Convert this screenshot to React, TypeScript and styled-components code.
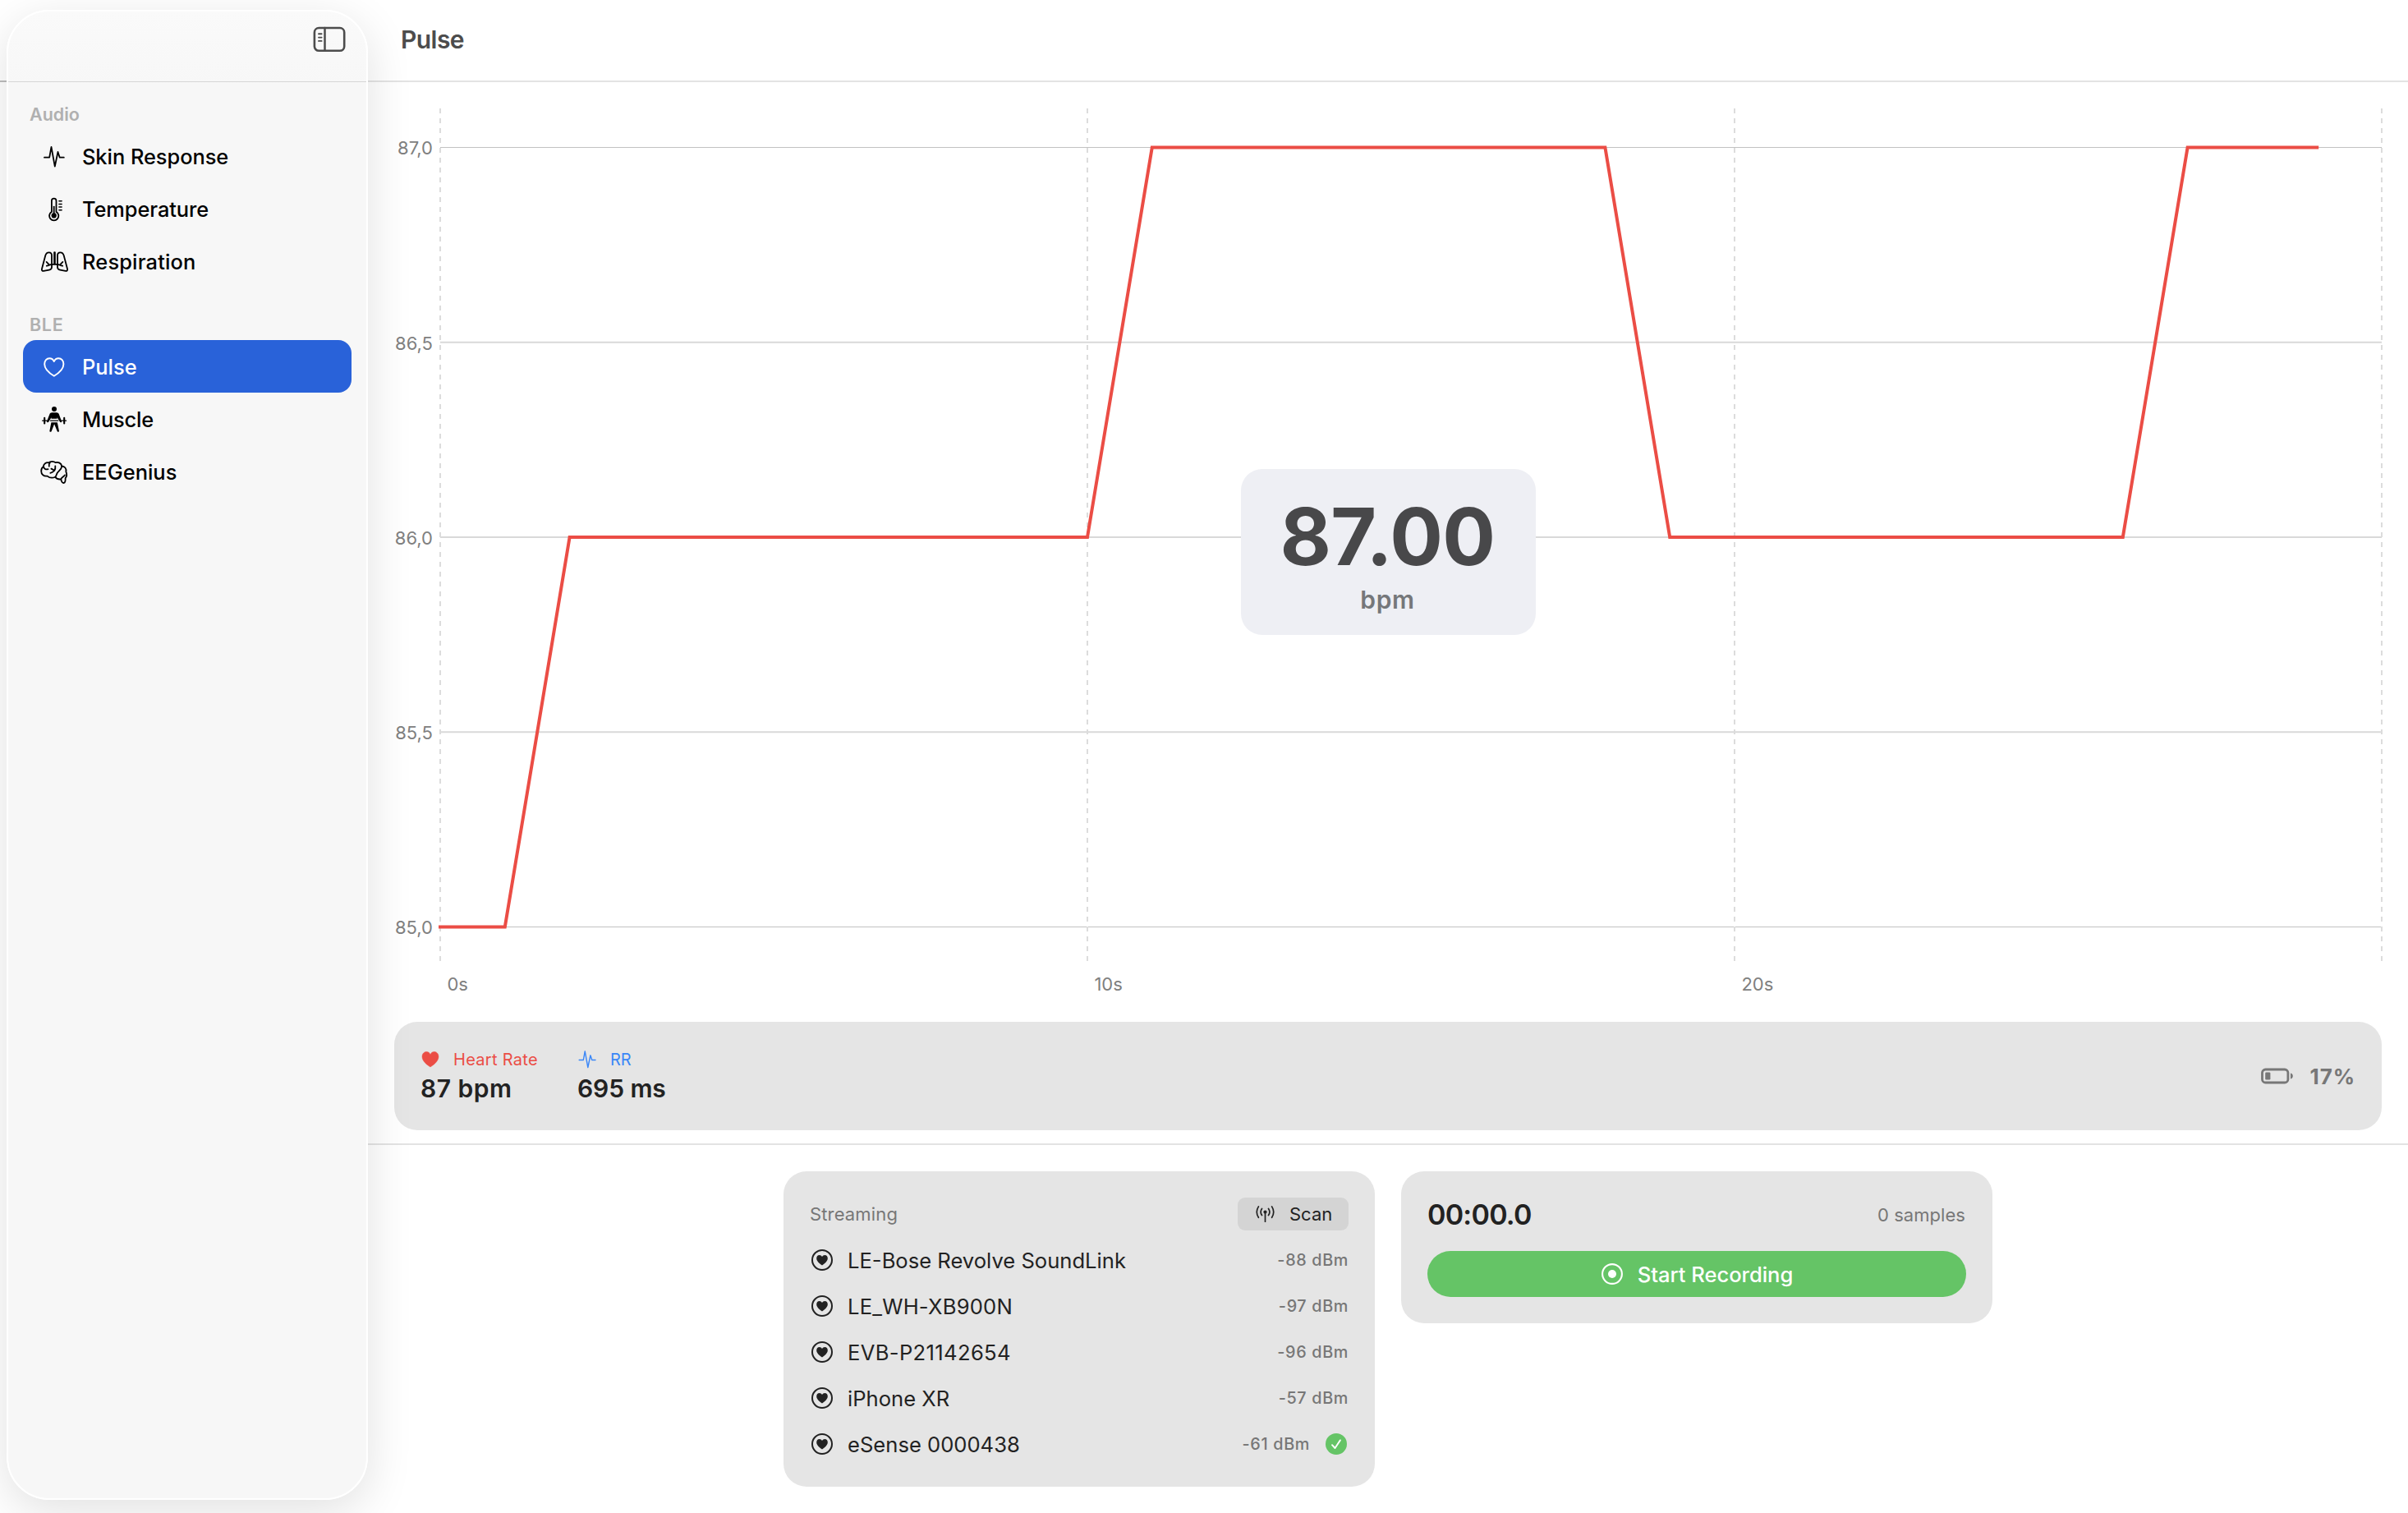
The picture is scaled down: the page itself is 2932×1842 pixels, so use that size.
import { ReactNode } from 'react'
import styled, { ThemeProvider, createGlobalStyle } from 'styled-components'

const theme = {
  bg: '#ffffff',
  sidebar: '#f7f7f7',
  card: '#e5e5e5',
  button: '#d4d4d4',
  readout: '#eeeff4',
  line: '#e3e3e3',
  text1: '#222222',
  text2: '#777777',
  text3: '#b0b0b0',
  accent: '#2962d9',
  red: '#eb4d45',
  blue: '#3b87f7',
  green: '#65c466',
}

const GlobalStyle = createGlobalStyle`
  * {
    box-sizing: border-box;
  }

  body {
    margin: 0;
    background: #ffffff;
    font-family: Inter, 'Liberation Sans', sans-serif;
    -webkit-font-smoothing: antialiased;
  }

  svg {
    display: block;
    flex-shrink: 0;
  }

  button {
    border: none;
    padding: 0;
    font-family: inherit;
  }
`

const Window = styled.div`
  display: flex;
  width: 2932px;
  height: 1842px;
  overflow: hidden;
  background: linear-gradient(#bdbdbd, #bdbdbd) 0 98px / 8px 2px no-repeat ${({ theme }) => theme.bg};
`

const Sidebar = styled.aside`
  position: relative;
  z-index: 1;
  flex-shrink: 0;
  width: 440px;
  height: 1814px;
  margin: 12px 0 0 8px;
  border: 2px solid #ffffff;
  border-radius: 52px;
  background: linear-gradient(#fafafa, ${({ theme }) => theme.sidebar} 90px);
  box-shadow: 0 14px 56px rgba(0, 0, 0, 0.12);
`

const SidebarBar = styled.div`
  display: flex;
  justify-content: flex-end;
  height: 86px;
  padding: 18px 25px 0 0;
  border-bottom: 1px solid #d6d6d6;
`

const Section = styled.nav`
  padding: 0 18px 0 18px;
`

const SectionTitle = styled.h2<{ first?: boolean; track?: number }>`
  height: ${({ first }) => (first ? '58px' : '64px')};
  margin: 0;
  padding: ${({ first }) => (first ? '26px' : '32px')} 0 0 8px;
  color: ${({ theme }) => theme.text3};
  font-size: 21.5px;
  font-weight: 600;
  line-height: 26px;
  letter-spacing: ${({ track = 0 }) => track}px;
`

const NavItem = styled.a<{ active?: boolean }>`
  display: flex;
  align-items: center;
  gap: 16px;
  height: 64px;
  padding-left: 20px;
  border-radius: 16px;
  color: ${({ active }) => (active ? '#ffffff' : '#000000')};
  background: ${({ active, theme }) => (active ? theme.accent : 'transparent')};
`

const NavLabel = styled.span<{ track: number }>`
  font-size: 25.4px;
  font-weight: 460;
  letter-spacing: ${({ track }) => track}px;
`

const Main = styled.main`
  display: flex;
  flex-direction: column;
  flex: 1;
`

const Header = styled.header`
  height: 100px;
  padding: 29px 0 0 40px;
  border-bottom: 2px solid ${({ theme }) => theme.line};
`

const Title = styled.h1`
  margin: 0;
  color: #4c4c4c;
  font-size: 30px;
  font-weight: 640;
  line-height: 38px;
  letter-spacing: -0.55px;
`

const ChartArea = styled.section`
  position: relative;
  height: 1144px;
`

const AxisLabel = styled.text`
  fill: #808080;
  font-size: 22px;
`

const Readout = styled.div`
  position: absolute;
  top: 471px;
  left: 1063px;
  display: flex;
  flex-direction: column;
  align-items: center;
  width: 359px;
  height: 202px;
  padding: 30px 2px 0 0;
  border-radius: 26px;
  background: ${({ theme }) => theme.readout};
`

const ReadoutValue = styled.div`
  color: #48484a;
  font-size: 96px;
  font-weight: 720;
  line-height: 104px;
  letter-spacing: -0.6px;
`

const ReadoutUnit = styled.div`
  margin-top: 6px;
  color: #75777a;
  font-size: 30px;
  font-weight: 580;
  line-height: 38px;
  letter-spacing: 0.6px;
`

const StatsPanel = styled.section`
  display: flex;
  justify-content: space-between;
  align-items: center;
  height: 132px;
  margin: 0 32px 16px;
  padding: 0 32px 0 32px;
  border-radius: 28px;
  background: ${({ theme }) => theme.card};
`

const Stats = styled.div`
  display: flex;
`

const Stat = styled.div`
  width: 191px;
`

const StatLabel = styled.div<{ tint: 'red' | 'blue'; track: number }>`
  display: flex;
  align-items: center;
  gap: 17px;
  height: 31px;
  padding-left: 1px;
  color: ${({ tint, theme }) => theme[tint]};
  font-size: 20px;
  letter-spacing: ${({ track }) => track}px;
`

const StatValue = styled.div<{ track: number }>`
  height: 41px;
  color: ${({ theme }) => theme.text1};
  font-size: 30px;
  font-weight: 600;
  line-height: 40px;
  letter-spacing: ${({ track }) => track}px;
`

const Battery = styled.div`
  display: flex;
  align-items: center;
  gap: 20px;
  color: ${({ theme }) => theme.text2};
  font-size: 26px;
  font-weight: 700;
  letter-spacing: 0.9px;
`

const Controls = styled.section`
  display: flex;
  justify-content: center;
  align-items: flex-start;
  gap: 32px;
  flex: 1;
  padding-top: 32px;
  border-top: 2px solid ${({ theme }) => theme.line};
`

const Card = styled.div<{ bottom: number }>`
  width: 720px;
  padding: 32px 32px ${({ bottom }) => bottom}px;
  border-radius: 28px;
  background: ${({ theme }) => theme.card};
`

const CardTop = styled.div<{ gap: number }>`
  display: flex;
  justify-content: space-between;
  align-items: center;
  height: 40px;
  margin-bottom: ${({ gap }) => gap}px;
`

const Caption = styled.span<{ track?: number }>`
  color: ${({ theme }) => theme.text2};
  font-size: 22px;
  letter-spacing: ${({ track = 0 }) => track}px;
`

const SampleCount = styled(Caption)`
  padding: 2px 1px 0 0;
`

const ScanButton = styled.button`
  display: flex;
  align-items: center;
  gap: 17px;
  width: 135px;
  height: 40px;
  padding-left: 21px;
  border-radius: 9px;
  color: ${({ theme }) => theme.text1};
  background: ${({ theme }) => theme.button};
  font-size: 22px;
`

const DeviceRow = styled.div`
  display: flex;
  align-items: center;
  height: 56px;
  padding-left: 2px;
  color: ${({ theme }) => theme.text1};
`

const DeviceName = styled.span<{ track: number }>`
  flex: 1;
  padding: 0 0 0 18px;
  font-size: 25.6px;
  letter-spacing: ${({ track }) => track}px;
`

const Signal = styled.span`
  color: ${({ theme }) => theme.text2};
  font-size: 19.8px;
  font-weight: 540;
  letter-spacing: 0.65px;
`

const Connected = styled.span`
  margin: 0 2px 0 19px;
`

const Timer = styled.span`
  color: ${({ theme }) => theme.text1};
  font-size: 34px;
  font-weight: 570;
  letter-spacing: -0.75px;
`

const RecordButton = styled.button`
  display: flex;
  justify-content: center;
  align-items: center;
  gap: 18px;
  width: 656px;
  height: 56px;
  padding-left: 1px;
  border-radius: 28px;
  color: #ffffff;
  background: ${({ theme }) => theme.green};
  font-size: 25.6px;
  font-weight: 500;
  line-height: 57px;
  letter-spacing: -0.05px;
`

function NavGlyph({ children }: { children: ReactNode }) {
  return (
    <svg
      width="36"
      height="36"
      viewBox="0 0 36 36"
      fill="none"
      stroke="currentColor"
      strokeWidth="1.8"
      strokeLinecap="round"
      strokeLinejoin="round"
    >
      {children}
    </svg>
  )
}

const wave = 'M6 19.7H12.2L14.5 7L18.8 30.6L22.5 13L24.7 19.7H29.8'
const heart =
  'M17.8 29.7C11 25.6 6.2 20.4 6.2 15.2C6.2 11 8.9 8.2 12.3 8.2C14.8 8.2 16.7 9.6 17.8 12C18.9 9.6 20.8 8.2 23.3 8.2C26.7 8.2 29.4 11 29.4 15.2C29.4 20.4 24.6 25.6 17.8 29.7Z'

const WaveGlyph = () => (
  <NavGlyph>
    <path d={wave} />
  </NavGlyph>
)

const ThermometerGlyph = () => (
  <NavGlyph>
    <path d="M14.9 21.9V8.4a2.8 2.8 0 0 1 5.6 0V21.9a5.6 5.6 0 1 1-5.6 0z" />
    <circle cx="17.7" cy="26.4" r="3.1" fill="currentColor" stroke="none" />
    <path d="M17.7 15.6V25" />
    <path d="M23.9 8.7h3.2M23.9 12.4h3.2M23.9 16h3.2M23.9 19.7h3.2" strokeWidth="1.5" />
  </NavGlyph>
)

const LungsGlyph = () => (
  <NavGlyph>
    <path d="M15 21.5V11c0-2.4-1.5-3.7-3.4-3.7-2 0-3.6 1.3-4.3 3.7L3 27.2c-.5 2 .5 3 2.2 2.7l6.6-1.3c2-.4 3.2-1.5 3.2-3.4z" />
    <path d="M22 21.5V11c0-2.4 1.5-3.7 3.4-3.7 2 0 3.6 1.3 4.3 3.7L34 27.2c.5 2-.5 3-2.2 2.7l-6.6-1.3c-2-.4-3.2-1.5-3.2-3.4z" />
    <path d="M18.5 7.6V21" strokeWidth="2.6" />
    <path d="M8.8 23.7c2.6 0 3.8-1.9 6.6-1.9h6.2c2.8 0 4 1.9 6.6 1.9M8.6 18.9l3.4 3.4M28.4 18.9L25 22.3" />
  </NavGlyph>
)

const HeartGlyph = () => (
  <NavGlyph>
    <path d={heart} strokeWidth="1.9" />
  </NavGlyph>
)

const LifterGlyph = () => (
  <NavGlyph>
    <g fill="currentColor" stroke="none">
      <circle cx="18" cy="5.9" r="3" />
      <path d="M15.3 10.2h5.6c1.4 0 2.3.7 2.8 1.9l3.3 8.6c.5 1.6-1.4 2.2-2.1.9l-3.3-5.4v1.6H14.5v-1.6l-3.2 5.4c-.8 1.3-2.7.7-2.2-.9l3.4-8.6c.5-1.2 1.4-1.9 2.8-1.9z" />
      <path d="M14.4 22.3h7.4l2.1 10.2c.3 1.5-1.8 1.8-2.2.4L18.1 24.2l-3.4 8.7c-.5 1.4-2.6 1.1-2.3-.4z" />
    </g>
    <path d="M3.6 20.2H9.6M26.7 20.2H32.6M13.5 20.2H22.7" strokeWidth="1.2" />
    <path d="M6.2 16.8V23.5M30.2 16.8V23.5" strokeWidth="2.1" />
  </NavGlyph>
)

const BrainGlyph = () => (
  <NavGlyph>
    <path d="M9.6 23.6C5.2 24.2 2.2 21.4 2.2 17.4C2.2 15 3.2 13 4.9 11.9C5 8.6 8 6.8 11.2 7.3C13.2 5.5 17.5 5.2 19.5 7.2C23.2 6.2 26.6 8 27.2 11.5C30.8 11.6 33.2 14.6 32.3 18.2C33.6 21 33.1 24.4 31.6 26.3C31.8 28.8 31.5 31.9 29.5 32C27 32 26.8 30 26.3 27.4C23.2 27.8 20.6 26.6 19.3 24.7C16 26.2 12 25.6 9.6 23.6Z" />
    <path d="M4.9 12c.4 2.8 3 4 5.6 3.2M12.8 7.3c-1.3 1.4-1.4 2.8-1 4.4M19.3 11.4c.6 4.6-1.8 7.4-6 8.4M14.4 14.6l4 2.2M27.2 11.7c-.2 4-3.7 5.2-5.6 8.3-.9 1.6-1 3.2-2.2 4.6M26.3 27.4c.4-2.4 3.6-3 4.6-5" />
  </NavGlyph>
)

const SidebarGlyph = () => (
  <svg width="40" height="32" viewBox="0 0 40 32" fill="none" stroke="#4c4c4c" strokeLinecap="round">
    <rect x="1.9" y="2" width="36.3" height="27.8" rx="5.4" strokeWidth="2.6" />
    <path d="M14.5 2V29.8" strokeWidth="2.5" />
    <path d="M7 9.3h3.6M7 13.6h3.6M7 17.9h3.6" strokeWidth="1.9" />
  </svg>
)

const SmallHeart = () => (
  <svg width="22" height="22" viewBox="5 7 25.6 24.6" fill="currentColor">
    <path d={heart} stroke="currentColor" strokeWidth="0.6" />
  </svg>
)

const SmallWave = () => (
  <svg
    width="22"
    height="22"
    viewBox="4.6 6 26.4 26.4"
    fill="none"
    stroke="currentColor"
    strokeWidth="1.7"
    strokeLinecap="round"
    strokeLinejoin="round"
  >
    <path d={wave} />
  </svg>
)

const BatteryGlyph = () => (
  <svg width="40" height="20" viewBox="0 0 40 20" fill="none" stroke="currentColor">
    <rect x="1.5" y="2" width="31.4" height="16" rx="4" strokeWidth="2.8" />
    <rect x="5.2" y="5.6" width="6.2" height="8.8" rx="1.2" fill="currentColor" stroke="none" />
    <path d="M36 6.4c1.9.5 2.8 1.7 2.8 3.6s-.9 3.1-2.8 3.6z" fill="currentColor" stroke="none" />
  </svg>
)

const AntennaGlyph = () => (
  <svg width="25" height="24" viewBox="0 0 25 24" fill="none" stroke="currentColor" strokeWidth="1.7" strokeLinecap="round">
    <circle cx="12.5" cy="9.6" r="2.1" fill="currentColor" stroke="none" />
    <path d="M12.5 10V21.2" />
    <path d="M8.5 5.4a7.2 7.2 0 0 0 0 8.2M16.5 5.4a7.2 7.2 0 0 1 0 8.2M4.4 2.9a12.4 12.4 0 0 0 0 13.4M20.6 2.9a12.4 12.4 0 0 1 0 13.4" />
  </svg>
)

const DeviceGlyph = () => (
  <svg width="26" height="26" viewBox="0 0 26 26" fill="none">
    <circle cx="13" cy="13" r="12" stroke="currentColor" strokeWidth="2" />
    <path
      d="M13 19.4C9.2 16.8 6.2 14 6.2 10.9c0-2.4 1.5-4 3.5-4 1.5 0 2.6.8 3.3 2.1.7-1.3 1.8-2.1 3.3-2.1 2 0 3.5 1.6 3.5 4 0 3.1-3 5.9-6.8 8.5z"
      fill="currentColor"
    />
  </svg>
)

const CheckGlyph = () => (
  <svg width="26" height="26" viewBox="0 0 26 26" fill="none">
    <circle cx="13" cy="13" r="13" fill={theme.green} />
    <path d="M8 14.2L11.5 18L17.9 8.4" stroke="#ffffff" strokeWidth="1.9" strokeLinecap="round" strokeLinejoin="round" />
  </svg>
)

const RecordGlyph = () => (
  <svg width="26" height="26" viewBox="0 0 26 26" fill="none">
    <circle cx="13" cy="13" r="11.9" stroke="currentColor" strokeWidth="2.1" />
    <circle cx="13" cy="13" r="5" fill="currentColor" />
  </svg>
)

const audioSensors = [
  { name: 'Skin Response', track: -0.03, icon: <WaveGlyph /> },
  { name: 'Temperature', track: -0.08, icon: <ThermometerGlyph /> },
  { name: 'Respiration', track: 0.18, icon: <LungsGlyph /> },
]

const bleSensors = [
  { name: 'Pulse', track: 0, icon: <HeartGlyph />, active: true },
  { name: 'Muscle', track: -0.18, icon: <LifterGlyph /> },
  { name: 'EEGenius', track: 0.03, icon: <BrainGlyph /> },
]

const devices = [
  { name: 'LE-Bose Revolve SoundLink', rssi: -88, track: 0 },
  { name: 'LE_WH-XB900N', rssi: -97, track: 0.22 },
  { name: 'EVB-P21142654', rssi: -96, track: 0.34 },
  { name: 'iPhone XR', rssi: -57, track: 0 },
  { name: 'eSense 0000438', rssi: -61, track: 0, connected: true },
]

// [seconds, bpm]
const samples = [
  [0, 85],
  [1, 85],
  [2, 86],
  [10, 86],
  [11, 87],
  [18, 87],
  [19, 86],
  [26, 86],
  [27, 87],
  [29, 87],
]

const PLOT = { left: 88, right: 2452, top: 79.5, bottom: 1028.5 }

const toX = (seconds: number) => PLOT.left + (seconds / 30) * (PLOT.right - PLOT.left)
const toY = (bpm: number) => PLOT.bottom - ((bpm - 85) / 2) * (PLOT.bottom - PLOT.top)

function PulseChart() {
  const points = samples.map(([s, bpm]) => `${toX(s)},${toY(bpm)}`).join(' ')

  return (
    <svg width="2484" height="1144" viewBox="0 0 2484 1144" fill="none">
      {[87, 86.5, 86, 85.5, 85].map((bpm) => {
        const edge = bpm === 87 || bpm === 85
        return (
          <g key={bpm}>
            <path
              d={`M${PLOT.left} ${toY(bpm)}H${PLOT.right}`}
              stroke={edge ? '#c2c2c2' : '#d9d9d9'}
              strokeWidth={edge ? 1 : 2}
            />
            <AxisLabel x="79" y={toY(bpm) + 8.8} textAnchor="end">
              {bpm.toFixed(1).replace('.', ',')}
            </AxisLabel>
          </g>
        )
      })}
      {[0, 10, 20, 30].map((s) => (
        <g key={s}>
          <path d={`M${toX(s)} 32V1072`} stroke="#dcdcdc" strokeWidth="2" strokeDasharray="6 6" />
          {s < 30 && (
            <AxisLabel x={toX(s) + 8.4} y="1105.8">
              {s}s
            </AxisLabel>
          )}
        </g>
      ))}
      <polyline points={points} stroke={theme.red} strokeWidth="4" strokeLinecap="square" />
    </svg>
  )
}

export default function App() {
  return (
    <ThemeProvider theme={theme}>
      <GlobalStyle />
      <Window>
        <Sidebar>
          <SidebarBar>
            <SidebarGlyph />
          </SidebarBar>
          <Section>
            <SectionTitle first>Audio</SectionTitle>
            {audioSensors.map(({ name, track, icon }) => (
              <NavItem key={name}>
                {icon}
                <NavLabel track={track}>{name}</NavLabel>
              </NavItem>
            ))}
          </Section>
          <Section>
            <SectionTitle track={0.7}>BLE</SectionTitle>
            {bleSensors.map(({ name, track, icon, active }) => (
              <NavItem key={name} active={active}>
                {icon}
                <NavLabel track={track}>{name}</NavLabel>
              </NavItem>
            ))}
          </Section>
        </Sidebar>

        <Main>
          <Header>
            <Title>Pulse</Title>
          </Header>

          <ChartArea>
            <PulseChart />
            <Readout>
              <ReadoutValue>87.00</ReadoutValue>
              <ReadoutUnit>bpm</ReadoutUnit>
            </Readout>
          </ChartArea>

          <StatsPanel>
            <Stats>
              <Stat>
                <StatLabel tint="red" track={0.3}>
                  <SmallHeart />
                  Heart Rate
                </StatLabel>
                <StatValue track={0.5}>87 bpm</StatValue>
              </Stat>
              <Stat>
                <StatLabel tint="blue" track={0}>
                  <SmallWave />
                  RR
                </StatLabel>
                <StatValue track={-0.1}>695 ms</StatValue>
              </Stat>
            </Stats>
            <Battery>
              <BatteryGlyph />
              17%
            </Battery>
          </StatsPanel>

          <Controls>
            <Card bottom={24}>
              <CardTop gap={8}>
                <Caption track={0.15}>Streaming</Caption>
                <ScanButton>
                  <AntennaGlyph />
                  Scan
                </ScanButton>
              </CardTop>
              {devices.map(({ name, rssi, track, connected }) => (
                <DeviceRow key={name}>
                  <DeviceGlyph />
                  <DeviceName track={track}>{name}</DeviceName>
                  <Signal>{rssi} dBm</Signal>
                  {connected && (
                    <Connected>
                      <CheckGlyph />
                    </Connected>
                  )}
                </DeviceRow>
              ))}
            </Card>

            <Card bottom={32}>
              <CardTop gap={25}>
                <Timer>00:00.0</Timer>
                <SampleCount track={0.05}>0 samples</SampleCount>
              </CardTop>
              <RecordButton>
                <RecordGlyph />
                Start Recording
              </RecordButton>
            </Card>
          </Controls>
        </Main>
      </Window>
    </ThemeProvider>
  )
}
